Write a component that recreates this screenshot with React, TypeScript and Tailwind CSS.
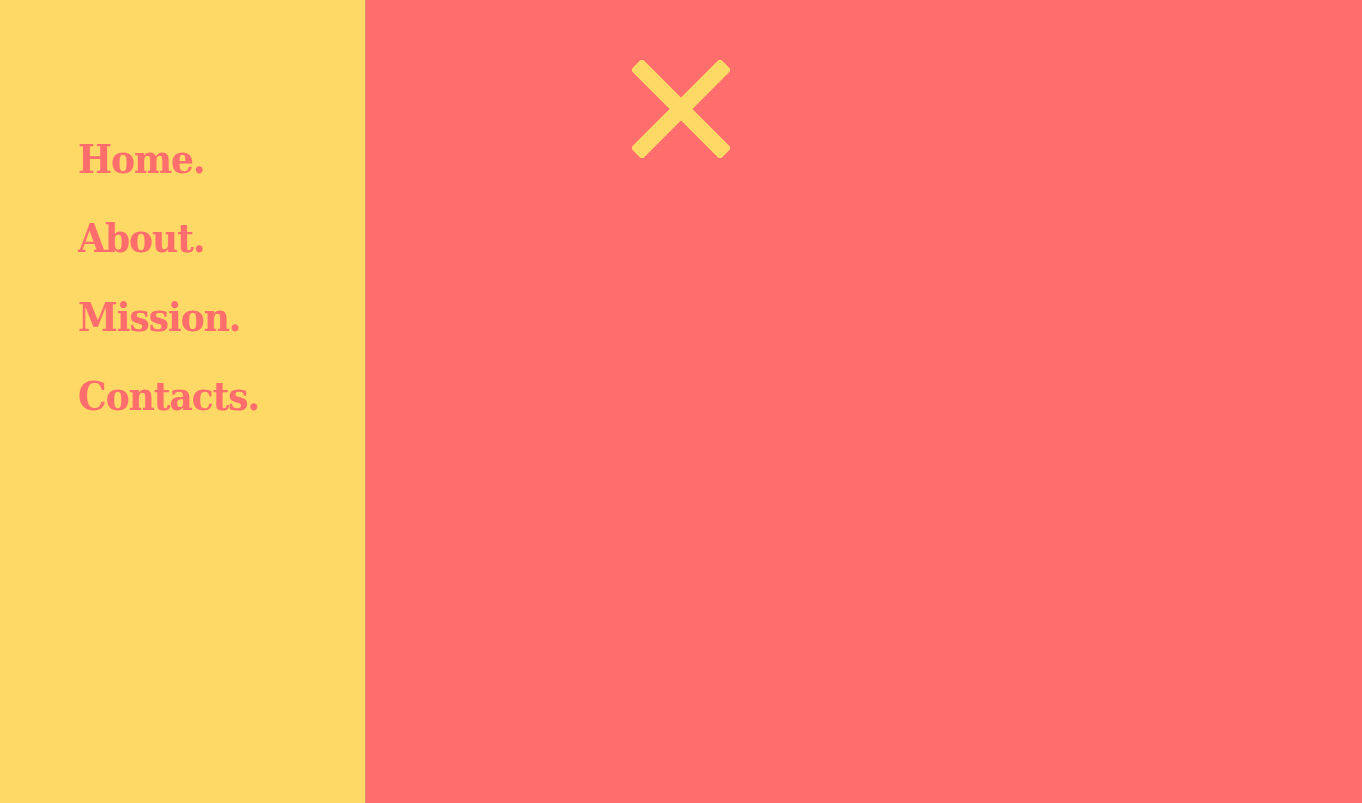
import React from "react";

const links = ["Home.", "About.", "Mission.", "Contacts."];

function CloseIcon() {
  return (
    <svg width="98" height="98" viewBox="0 0 100 100" fill="#ffd966">
      <rect x="-14.5" y="41.8" width="129" height="16.4" rx="2.5" transform="rotate(45 50 50)" />
      <rect x="-14.5" y="41.8" width="129" height="16.4" rx="2.5" transform="rotate(-45 50 50)" />
    </svg>
  );
}

export default function App() {
  return (
    <div className="flex h-[803px] w-full overflow-hidden bg-[#ff6d6d]">
      <nav className="w-[365px] shrink-0 bg-[#ffd966] pl-[78px] pt-[129px] shadow-[1px_0_0_#e88a6a]">
        <ul className="flex flex-col">
          {links.map((l) => (
            <li
              key={l}
              className="h-[79px] font-['DejaVu_Serif_Condensed','DejaVu_Serif',serif] text-[40px] font-bold leading-[60px] tracking-[-1px] text-[#ff6d6d]"
            >
              {l}
            </li>
          ))}
        </ul>
      </nav>
      <main className="flex-1">
        <div className="ml-[267px] mt-[60px] w-[98px]">
          <CloseIcon />
        </div>
      </main>
    </div>
  );
}
